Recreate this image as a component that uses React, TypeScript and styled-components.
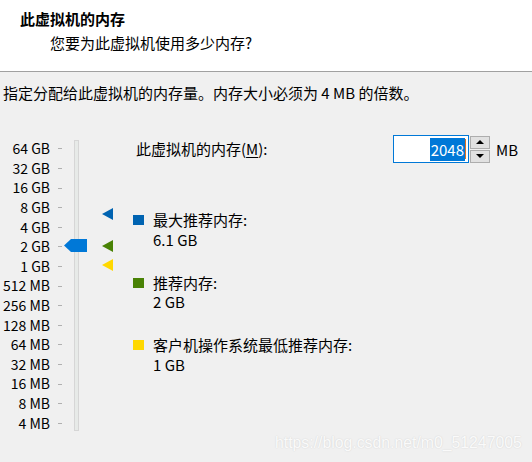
import React from "react";
import styled, { createGlobalStyle } from "styled-components";

const GlobalStyle = createGlobalStyle`
  html, body {
    margin: 0;
    padding: 0;
    background: #f0f0f0;
  }
  #root {
    width: 532px;
    height: 462px;
    overflow: hidden;
  }
`;

const ROW = 19.6;
const MAIN_TOP = 136;

// position on the slider, log2 scale from 64 GB (top) to 4 MB (bottom)
const yFor = (mb: number) => 148.5 + (16 - Math.log2(mb)) * ROW - MAIN_TOP;

const scaleLabels = [
  "64 GB", "32 GB", "16 GB", "8 GB", "4 GB", "2 GB", "1 GB", "512 MB",
  "256 MB", "128 MB", "64 MB", "32 MB", "16 MB", "8 MB", "4 MB",
];

const markers = [
  { mb: 6.1 * 1024, color: "#0063b1", title: "最大推荐内存:", value: "6.1 GB" },
  { mb: 2048, color: "#498205", title: "推荐内存:", value: "2 GB" },
  { mb: 1024, color: "#ffd800", title: "客户机操作系统最低推荐内存:", value: "1 GB" },
];

const Page = styled.div`
  position: relative;
  height: 462px;
  font-family: "Noto Sans CJK SC", "Noto Sans", sans-serif;
  color: #000;
  background: #f0f0f0;
`;

const Header = styled.div`
  background: #fff;
  height: 72px;
  border-bottom: 1px solid #a0a0a0;
  box-sizing: border-box;
  padding-top: 9px;
`;

const Title = styled.div`
  font-size: 15px;
  font-weight: 700;
  line-height: 20px;
  padding-left: 20px;
`;

const Subtitle = styled.div`
  font-size: 15px;
  line-height: 20px;
  padding-left: 50px;
  margin-top: 4px;
`;

const Intro = styled.div`
  font-size: 15px;
  line-height: 20px;
  padding: 11px 0 0 3px;
`;

const Main = styled.div`
  display: flex;
  align-items: flex-start;
  margin-top: 32px;
`;

const Scale = styled.div`
  position: relative;
  display: flex;
  align-items: flex-start;
  padding-top: 4.2px;
`;

const Rows = styled.div`
  width: 62px;
`;

const ScaleRow = styled.div`
  display: flex;
  align-items: center;
  height: ${ROW}px;
`;

const ScaleLabel = styled.span`
  width: 50px;
  text-align: right;
  font-size: 14px;
  line-height: ${ROW}px;
`;

const Tick = styled.span`
  width: 4px;
  height: 1px;
  margin-left: 8px;
  background: #b0b0b0;
`;

const Track = styled.div`
  width: 5px;
  height: 291px;
  margin: 1px 0 0 12px;
  box-sizing: border-box;
  border: 1px solid #d6d6d6;
  background: #e7eae8;
`;

const Thumb = styled.svg`
  position: absolute;
  left: 64px;
`;

const Markers = styled.div`
  position: relative;
  width: 11px;
  height: 300px;
  margin-left: 23px;
`;

const Marker = styled.svg`
  position: absolute;
  left: 0;
`;

const Content = styled.div`
  margin-left: 20px;
  flex: 1;
`;

const MemoryRow = styled.div`
  display: grid;
  grid-template-columns: 260px auto;
  align-items: center;
  height: 28px;
  font-size: 15px;
`;

const MemoryLabel = styled.span`
  padding-left: 3px;
  line-height: 20px;
`;

const Underlined = styled.span`
  text-decoration: underline;
  text-underline-offset: 2px;
`;

const InputGroup = styled.div`
  display: flex;
  align-items: center;
`;

const NumberBox = styled.div`
  width: 76px;
  height: 28px;
  box-sizing: border-box;
  border: 1px solid #0078d7;
  background: #fff;
  display: flex;
  align-items: center;
  justify-content: flex-end;
  padding-right: 2px;
`;

const Selected = styled.span`
  background: #0078d7;
  color: #fff;
  font-size: 15px;
  line-height: 23px;
  padding: 0 1px;
`;

const Caret = styled.span`
  width: 1px;
  height: 20px;
  background: #e07020;
`;

const Spinner = styled.div`
  display: flex;
  flex-direction: column;
  margin-left: 1px;
  height: 27px;
  gap: 1px;
`;

const SpinButton = styled.div`
  width: 20px;
  flex: 1;
  box-sizing: border-box;
  border: 1px solid #adadad;
  background: #e1e1e1;
  display: flex;
  align-items: center;
  justify-content: center;
`;

const Unit = styled.span`
  margin-left: 6px;
  font-size: 15px;
`;

const Legend = styled.div`
  display: flex;
  flex-direction: column;
  gap: 23.5px;
  margin-top: 47px;
`;

const LegendItem = styled.div`
  display: flex;
  align-items: flex-start;
  font-size: 15px;
  line-height: 19.5px;
`;

const Swatch = styled.span<{ $color: string }>`
  width: 11px;
  height: 10px;
  margin-top: 5px;
  margin-right: 9px;
  background: ${(p) => p.$color};
`;

const Watermark = styled.div`
  position: absolute;
  left: 275px;
  top: 433px;
  font-family: "Liberation Sans", Arial, sans-serif;
  font-size: 15.8px;
  line-height: 20px;
  color: #fafafa;
  text-shadow: 0 0 1.5px rgba(0, 0, 0, 0.15);
  pointer-events: none;
`;

export default function App() {
  const thumbTop = yFor(2048) - 6.5;
  return (
    <Page>
      <GlobalStyle />
      <Header>
        <Title>此虚拟机的内存</Title>
        <Subtitle>您要为此虚拟机使用多少内存?</Subtitle>
      </Header>
      <Intro>指定分配给此虚拟机的内存量。内存大小必须为 4 MB 的倍数。</Intro>
      <Main>
        <Scale>
          <Rows>
            {scaleLabels.map((l) => (
              <ScaleRow key={l}>
                <ScaleLabel>{l}</ScaleLabel>
                <Tick />
              </ScaleRow>
            ))}
          </Rows>
          <Track />
          <Thumb width="23" height="13" viewBox="0 0 23 13" style={{ top: thumbTop }}>
            <path d="M0 6.5 L7 0 H23 V13 H7 Z" fill="#0078d7" />
          </Thumb>
        </Scale>
        <Markers>
          {markers.map((m) => (
            <Marker
              key={m.value}
              width="11"
              height="12"
              viewBox="0 0 11 12"
              style={{ top: yFor(m.mb) - 6 }}
            >
              <path d="M0 6 L11 0 V12 Z" fill={m.color} />
            </Marker>
          ))}
        </Markers>
        <Content>
          <MemoryRow>
            <MemoryLabel>
              此虚拟机的内存(<Underlined>M</Underlined>):
            </MemoryLabel>
            <InputGroup>
              <NumberBox>
                <Selected>2048</Selected>
                <Caret />
              </NumberBox>
              <Spinner>
                <SpinButton>
                  <svg width="8" height="4" viewBox="0 0 8 4">
                    <path d="M0 4 L4 0 L8 4 Z" fill="#000" />
                  </svg>
                </SpinButton>
                <SpinButton>
                  <svg width="8" height="4" viewBox="0 0 8 4">
                    <path d="M0 0 L4 4 L8 0 Z" fill="#000" />
                  </svg>
                </SpinButton>
              </Spinner>
              <Unit>MB</Unit>
            </InputGroup>
          </MemoryRow>
          <Legend>
            {markers.map((m) => (
              <LegendItem key={m.value}>
                <Swatch $color={m.color} />
                <div>
                  <div>{m.title}</div>
                  <div>{m.value}</div>
                </div>
              </LegendItem>
            ))}
          </Legend>
        </Content>
      </Main>
      <Watermark>https://blog.csdn.net/m0_51247005</Watermark>
    </Page>
  );
}
